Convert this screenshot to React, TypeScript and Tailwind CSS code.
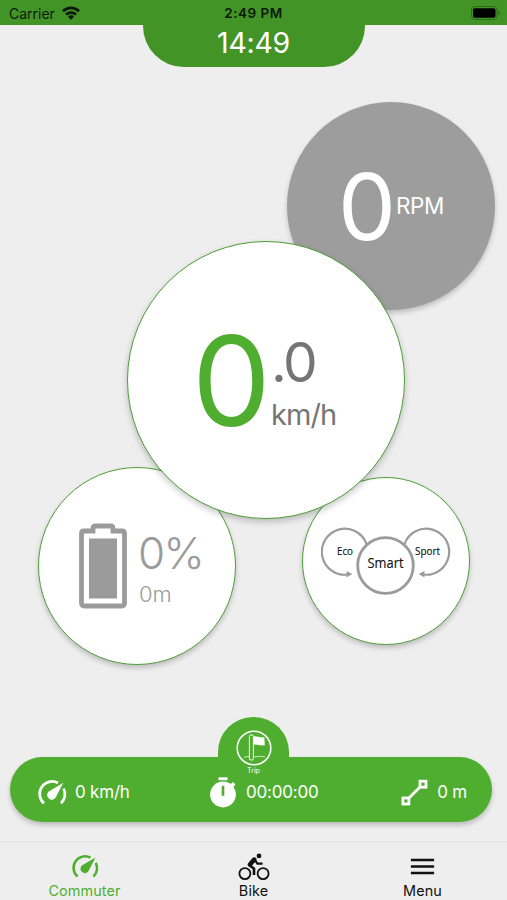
import type { ReactNode } from "react"
import { IoMdMenu } from "react-icons/io"

function WifiIcon() {
  return (
    <svg viewBox="0 0 18 14" className="mb-[2px] h-[14px] w-[18px]" fill="none" stroke="#0c1a07" strokeWidth="2.7">
      <path d="M1 5.2a11.4 11.4 0 0 1 16 0" />
      <path d="M4 8.6a7.2 7.2 0 0 1 10 0" />
      <path d="M9 13.8L6 10.8a4.3 4.3 0 0 1 6 0z" fill="#0c1a07" stroke="none" />
    </svg>
  )
}

function PhoneBatteryIcon() {
  return (
    <svg viewBox="0 0 30 14" className="h-[14px] w-[30px]">
      <rect x="0.5" y="0.5" width="25.5" height="13" rx="3.5" fill="none" stroke="#2d6b19" />
      <rect x="2" y="2.3" width="22.5" height="9.4" rx="1.8" fill="#000" />
      <path d="M27.3 4.8v4.4c1.1-.5 1.6-1.2 1.6-2.2s-.5-1.7-1.6-2.2z" fill="#2d6b19" />
    </svg>
  )
}

function BatteryIcon() {
  return (
    <svg viewBox="0 0 48 86" className="h-[86px] w-[48px] shrink-0">
      <path
        d="M5 8h9V5.500q0-2.500 2.500-2.500h15Q34 3 34 5.500V8h9q2.500 0 2.500 2.500v69.500q0 3-3 3h-37q-3 0-3-3v-69.500q0-2.500 2.500-2.500z"
        fill="none"
        stroke="#9b9b9b"
        strokeWidth="4.8"
      />
      <rect x="10" y="15.500" width="28" height="60" fill="#9b9b9b" />
    </svg>
  )
}

function SpeedIcon({ className }: { className: string }) {
  return (
    <svg viewBox="0 0 30 28" className={className} fill="none" stroke="currentColor" strokeWidth="2.700">
      <path d="M7 24.300A12.400 12.400 0 0 1 21 4" />
      <path d="M26.600 9.500A12.400 12.400 0 0 1 24 24.300" />
      <path d="M26.300 3.800L19.200 17.600a4.700 4.700 0 1 1-7.500-5.200z" fill="currentColor" stroke="none" />
    </svg>
  )
}

function StopwatchIcon() {
  return (
    <svg viewBox="0 0 28 32" className="h-8 w-7" fill="currentColor">
      <rect x="9.500" y="0.300" width="9" height="2.900" />
      <circle cx="14" cy="17.500" r="12.900" />
      <path d="M21.500 7.300l2.500-2.300 2.500 2.500-2.200 2.500z" />
      <rect x="12.700" y="8.800" width="2.600" height="10" fill="#4fae2f" />
    </svg>
  )
}

function BikeIcon() {
  return (
    <svg viewBox="0 0 32 28" className="h-7 w-8" fill="none" stroke="currentColor">
      <circle cx="6.900" cy="20.600" r="5.500" strokeWidth="1.800" />
      <circle cx="25.100" cy="20.600" r="5.500" strokeWidth="1.800" />
      <circle cx="21" cy="2.900" r="2.400" fill="currentColor" stroke="none" />
      <path d="M16.200 6.600L12 11.400" strokeWidth="4.600" strokeLinecap="round" />
      <path d="M11.500 12.200L16 15.600V22" strokeWidth="2.600" />
      <path d="M16.800 6.800l2.600 3.900h5.200" strokeWidth="2.200" />
    </svg>
  )
}

function AssistModes() {
  return (
    <svg viewBox="0 0 130 68" className="h-[68px] w-[130px]" fontFamily="Open Sans, Noto Sans, sans-serif">
      <g fill="none" stroke="#9b9b9b" strokeWidth="2.200">
        <path d="M45.500 17A23 23 0 1 0 27 47.500" />
        <path d="M83.500 17A23 23 0 1 1 102 47.500" />
        <circle cx="64.500" cy="38.500" r="27.800" fill="#fff" strokeWidth="2.800" />
      </g>
      <path d="M25.500 44l5.800 3-5.800 3.500zM103.500 44l-5.800 3 5.800 3.500z" fill="#9b9b9b" />
      <g fill="#111" stroke="#111" strokeWidth="0.150" textAnchor="middle">
        <text x="24" y="27.500" fontSize="10.500" textLength="16" lengthAdjust="spacingAndGlyphs">Eco</text>
        <text x="64.500" y="40.500" fontSize="14.500" textLength="36" lengthAdjust="spacingAndGlyphs">Smart</text>
        <text x="106.500" y="27.500" fontSize="10.500" textLength="25" lengthAdjust="spacingAndGlyphs">Sport</text>
      </g>
    </svg>
  )
}

function FlagIcon() {
  return (
    <svg viewBox="0 0 36 36" className="size-9" fill="none" stroke="#fff">
      <circle cx="18" cy="18" r="16.800" strokeWidth="1.500" />
      <rect x="13.400" y="5" width="4" height="25" rx="1.500" strokeWidth="1" />
      <path d="M17.800 6.500c3-.8 5 1.300 10.500.8l.5 8c-5 .7-8-1.300-11-.5z" fill="#fff" stroke="none" />
      <path d="M8 27.500q3-1.700 5.500-.8M17.500 27q6-1.500 11.500 0" strokeWidth="0.700" />
    </svg>
  )
}

function DistanceIcon() {
  return (
    <svg viewBox="0 0 28 28" className="size-7" fill="none" stroke="#fff" strokeWidth="2.800">
      <path d="M8.500 19.500L20 8" />
      <rect x="2.900" y="19" width="6" height="6" />
      <rect x="20" y="2.200" width="6" height="6" />
    </svg>
  )
}

function TabItem({ icon, label, active }: { icon: ReactNode; label: string; active?: boolean }) {
  return (
    <div className={active ? "flex flex-1 flex-col items-center text-[#4fae2f]" : "flex flex-1 flex-col items-center text-[#111]"}>
      <div className="flex h-[31px] items-center justify-center">{icon}</div>
      <span className="text-[14.400px] leading-[17px] tracking-[0.100px]">{label}</span>
    </div>
  )
}

export default function App() {
  return (
    <div className="flex h-[900px] w-[507px] flex-col overflow-hidden bg-[#eee] font-['Inter',sans-serif]">
      {/* Status bar */}
      <header className="grid h-[25px] shrink-0 grid-cols-3 items-center bg-[#439427] pt-[2px] text-[#0c1a07]">
        <div className="flex items-center gap-[7px] pl-[9px] text-[14px]">
          Carrier
          <WifiIcon />
        </div>
        <div className="text-center text-[13.500px] font-semibold tracking-[0.500px]">2:49 PM</div>
        <div className="flex justify-end pb-[2px] pr-[6px]">
          <PhoneBatteryIcon />
        </div>
      </header>

      {/* Clock */}
      <div className="mx-auto flex h-[42px] w-[222px] shrink-0 justify-center rounded-b-[41px] bg-[#439427] pt-[2px] text-[28.500px] leading-[32px] tracking-[-0.300px] text-white">
        14:49
      </div>

      {/* Overlapping dials */}
      <main className="relative h-[650px] shrink-0">
        <div className="absolute left-[287px] top-[35px] flex size-[208px] items-center justify-center rounded-full bg-[#9d9d9d] pt-[2px] text-white shadow-[0_3px_5px_rgba(0,0,0,0.2)]">
          <span className="text-[92px] leading-none">0</span>
          <span className="pb-[3px] text-[22.500px] tracking-[-0.400px]">RPM</span>
        </div>

        <div className="absolute left-[38px] top-[400px] flex size-[198px] items-center rounded-full border border-[#4d9f38] bg-white pl-[40px] text-[#9b9b9b] shadow-[0_3px_5px_rgba(0,0,0,0.2)]">
          <BatteryIcon />
          <div className="flex flex-col pl-[11px] pt-[7px]">
            <span className="text-[44px] font-[350] leading-[48px] tracking-[-1.700px]">0%</span>
            <span className="pl-px text-[22px] font-[350] leading-[34px]">0m</span>
          </div>
        </div>

        <div className="absolute left-[302px] top-[410px] flex size-[168px] justify-center rounded-full border border-[#4d9f38] bg-white pt-[49px] shadow-[0_3px_5px_rgba(0,0,0,0.2)]">
          <AssistModes />
        </div>

        <div className="absolute left-[127px] top-[174px] flex size-[278px] items-center rounded-full border border-[#4d9f38] bg-white pl-[64px] shadow-[0_3px_6px_rgba(0,0,0,0.22)]">
          <span className="w-[79px] text-[125px] leading-none text-[#4fae2f]">0</span>
          <div className="flex flex-col pt-[6px] text-[#757575]">
            <span className="text-[55px] leading-[62px] tracking-[-2.500px]">.0</span>
            <span className="text-[29px] leading-[43px] tracking-[-0.900px]">km/h</span>
          </div>
        </div>
      </main>

      {/* Trip summary */}
      <section className="flex shrink-0 flex-col">
        <div className="z-10 -mb-[20px] mx-auto flex h-[60px] w-[71px] flex-col items-center rounded-t-[35px] bg-[#4fae2f] pt-[13px] text-white">
          <FlagIcon />
          <span className="text-[7px] leading-[9px]">Trip</span>
        </div>
        <div className="ml-[10px] flex h-[65px] w-[482px] items-center rounded-full bg-[#4fae2f] pt-[7px] text-[17px] tracking-[-0.200px] text-white shadow-[0_3px_5px_rgba(0,0,0,0.22)]">
          <div className="flex w-[189px] items-center gap-[8px] pl-[27px]">
            <SpeedIcon className="h-7 w-[30px]" />
            0 km/h
          </div>
          <div className="flex items-center gap-[9px] pl-[10px]">
            <StopwatchIcon />
            00:00:00
          </div>
          <div className="ml-auto flex items-center gap-[9px] pr-[25px]">
            <DistanceIcon />
            0 m
          </div>
        </div>
      </section>

      {/* Bottom tabs */}
      <nav className="mt-auto flex h-[59px] shrink-0 border-t border-[#e4e4e4] pt-[9px]">
        <TabItem active icon={<SpeedIcon className="h-[26px] w-[28px]" />} label="Commuter" />
        <TabItem icon={<BikeIcon />} label="Bike" />
        <TabItem icon={<IoMdMenu className="size-[31px]" />} label="Menu" />
      </nav>
    </div>
  )
}
